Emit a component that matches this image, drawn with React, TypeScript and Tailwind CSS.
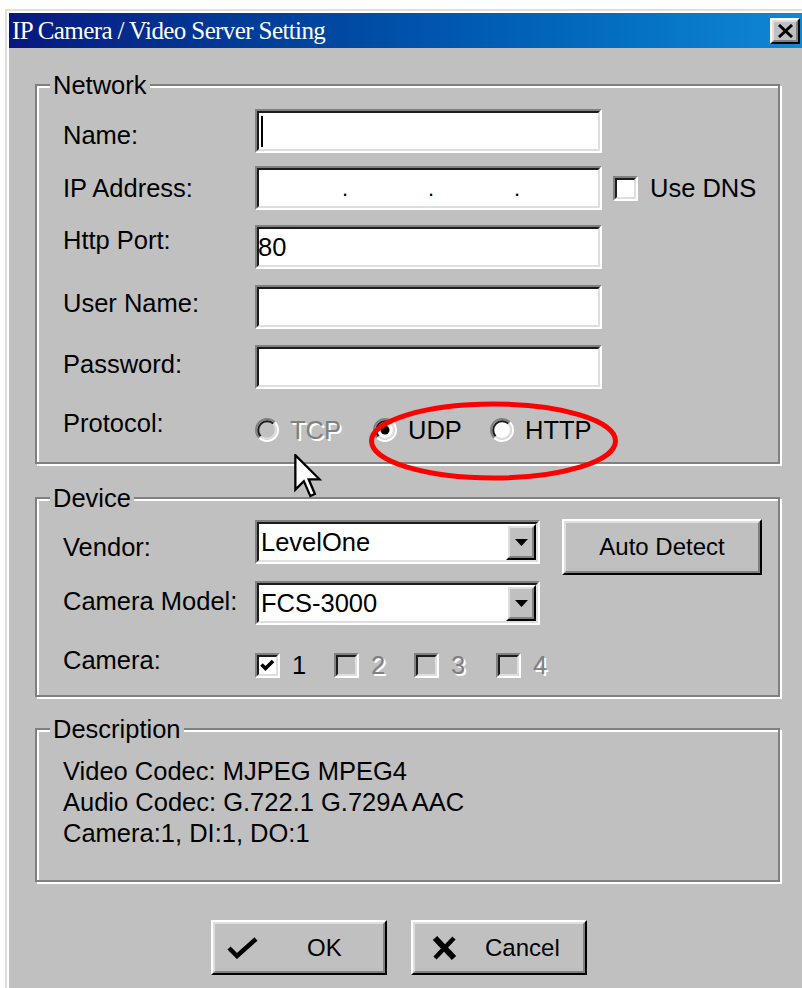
import React from 'react';

type BoxProps = { className?: string; children?: React.ReactNode };

// classic 3D edges: sunken for fields, raised for buttons
const Sunken: React.FC<BoxProps & { fill?: string }> = ({ className = '', fill = 'bg-white', children }) => (
    <div className={`border-2 border-t-[#808080] border-l-[#808080] border-r-white border-b-white ${className}`}>
        <div className={`flex h-full w-full items-center border-2 border-t-[#1c1c1c] border-l-[#1c1c1c] border-r-[#dfdfdf] border-b-[#dfdfdf] ${fill}`}>
            {children}
        </div>
    </div>
);

const Raised: React.FC<BoxProps & { inner?: string }> = ({ className = '', inner = '', children }) => (
    <div className={`border-2 border-t-white border-l-white border-r-black border-b-black bg-[#c0c0c0] ${className}`}>
        <div className={`flex h-full w-full items-center border-2 border-t-[#dfdfdf] border-l-[#dfdfdf] border-r-[#808080] border-b-[#808080] ${inner}`}>
            {children}
        </div>
    </div>
);

const Group: React.FC<BoxProps & { title: string }> = ({ title, className = '', children }) => (
    <div className={`relative ml-[26px] w-[745px] border-2 border-[#808080] shadow-[inset_2px_2px_0_#fff,2px_2px_0_#fff] ${className}`}>
        <span className="absolute left-[13px] top-[-14px] bg-[#c0c0c0] px-[3px] leading-[26px]">{title}</span>
        {children}
    </div>
);

const disabledText = 'text-[#808080] [text-shadow:2px_2px_0_#fff]';

const CheckBox: React.FC<{ checked?: boolean; disabled?: boolean; className?: string }> = ({ checked, disabled, className = '' }) => (
    <Sunken className={`h-[25px] w-[25px] shrink-0 ${className}`} fill={disabled ? 'bg-[#c0c0c0]' : 'bg-white'}>
        {checked && (
            <svg width="17" height="17" viewBox="0 0 17 17">
                <polyline points="2.5,7.5 6.5,11.5 14,4" fill="none" stroke="#000" strokeWidth="3.6" />
            </svg>
        )}
    </Sunken>
);

const Radio: React.FC<{ checked?: boolean; disabled?: boolean }> = ({ checked, disabled }) => (
    <svg width="24" height="24" viewBox="0 0 24 24" className="shrink-0">
        <circle cx="12" cy="12" r="9" fill={disabled ? '#c0c0c0' : '#fff'} />
        <path d="M4.22 19.78A11 11 0 0 1 19.78 4.22" fill="none" stroke="#808080" strokeWidth="2" />
        <path d="M19.78 4.22A11 11 0 0 1 4.22 19.78" fill="none" stroke="#fff" strokeWidth="2" />
        <path d="M5.64 18.36A9 9 0 0 1 18.36 5.64" fill="none" stroke="#1c1c1c" strokeWidth="2" />
        <path d="M18.36 5.64A9 9 0 0 1 5.64 18.36" fill="none" stroke="#dfdfdf" strokeWidth="2" />
        {checked && <circle cx="12" cy="12" r="4.5" fill="#000" />}
    </svg>
);

const Combo: React.FC<{ value: string; className?: string }> = ({ value, className = '' }) => (
    <Sunken className={`h-[44px] w-[285px] shrink-0 ${className}`}>
        <span className="ml-[2px] flex-1">{value}</span>
        <Raised className="h-full w-[30px]" inner="justify-center">
            <svg width="13" height="7" viewBox="0 0 13 7">
                <polygon points="0,0 13,0 6.5,7" fill="#000" />
            </svg>
        </Raised>
    </Sunken>
);

const Field: React.FC<BoxProps> = ({ children }) => (
    <Sunken className="h-[44px] w-[347px] shrink-0">{children}</Sunken>
);

const Row: React.FC<{ label: string; labelClass?: string; className?: string; children?: React.ReactNode }> = ({
    label,
    labelClass = '',
    className = '',
    children,
}) => (
    <div className={`flex h-[44px] items-center ${className}`}>
        <span className={`w-[192px] shrink-0 ${labelClass}`}>{label}</span>
        {children}
    </div>
);

export default function App() {
    return (
        <div className="relative h-[988px] overflow-hidden bg-white pl-[5px] pt-[9px] font-['Liberation_Sans',Arial,sans-serif] text-[25.5px] text-black">
            <div className="h-[990px] border-l-2 border-t-2 border-[#dfdfdf] bg-[#c0c0c0] pl-[2px] pt-[2px] shadow-[inset_2px_2px_0_#fff]">
                {/* Title bar */}
                <div className="flex h-[35px] items-center justify-between bg-gradient-to-r from-[#08177f] to-[#1088d4] pl-[3px] pr-[2px]">
                    <span className="font-['Liberation_Serif','Times_New_Roman',serif] text-[25px] tracking-[-0.6px] text-white">
                        IP Camera / Video Server Setting
                    </span>
                    <Raised className="h-[26px] w-[30px]" inner="justify-center">
                        <svg width="17" height="14" viewBox="0 0 17 14">
                            <path d="M2 1L15 13M15 1L2 13" stroke="#000" strokeWidth="3" />
                        </svg>
                    </Raised>
                </div>

                {/* Network */}
                <Group title="Network" className="mt-[36px] pb-[10px] pl-[26px] pt-[23px]">
                    <Row label="Name:" labelClass="mt-[8px]">
                        <Field>
                            <span className="ml-[2px] h-[31px] w-[2px] bg-black" />
                        </Field>
                    </Row>
                    <Row label="IP Address:" className="mt-[13px]">
                        <Field>
                            <div className="flex pl-[3px] text-[22px]">
                                <span className="w-[86px] text-right">.</span>
                                <span className="w-[86px] text-right">.</span>
                                <span className="w-[86px] text-right">.</span>
                            </div>
                        </Field>
                        <CheckBox className="ml-[11px]" />
                        <span className="ml-[12px]">Use DNS</span>
                    </Row>
                    <Row label="Http Port:" labelClass="mt-[-14px]" className="mt-[15px]">
                        <Field>
                            <span className="ml-[-1px]">80</span>
                        </Field>
                    </Row>
                    <Row label="User Name:" labelClass="mt-[-8px]" className="mt-[16px]">
                        <Field />
                    </Row>
                    <Row label="Password:" labelClass="mt-[-6px]" className="mt-[16px]">
                        <Field />
                    </Row>
                    <div className="mt-[19px] flex h-[44px] items-center">
                        <span className="mt-[-14px] w-[192px] shrink-0">Protocol:</span>
                        <div className="flex w-[118px] items-center gap-[11px]">
                            <Radio disabled />
                            <span className={disabledText}>TCP</span>
                        </div>
                        <div className="flex w-[117px] items-center gap-[11px]">
                            <Radio checked />
                            <span>UDP</span>
                        </div>
                        <div className="flex items-center gap-[11px]">
                            <Radio />
                            <span>HTTP</span>
                        </div>
                    </div>
                </Group>

                {/* Device */}
                <Group title="Device" className="mt-[33px] pb-[17px] pl-[26px] pt-[20px]">
                    <div className="flex h-[56px] items-start">
                        <span className="mt-[6px] flex h-[44px] w-[192px] shrink-0 items-center">Vendor:</span>
                        <Combo value="LevelOne" className="mt-[1px]" />
                        <Raised className="ml-[22px] h-[56px] w-[200px] text-[24px]" inner="justify-center">
                            Auto Detect
                        </Raised>
                    </div>
                    <Row label="Camera Model:" labelClass="mt-[-3px]" className="mt-[6px]">
                        <Combo value="FCS-3000" />
                    </Row>
                    <div className="mt-[27px] flex h-[26px] items-center">
                        <span className="mt-[-10px] w-[192px] shrink-0">Camera:</span>
                        <div className="flex w-[79px] items-center gap-[12px]">
                            <CheckBox checked />
                            <span>1</span>
                        </div>
                        <div className="flex w-[80px] items-center gap-[12px]">
                            <CheckBox disabled />
                            <span className={disabledText}>2</span>
                        </div>
                        <div className="flex w-[82px] items-center gap-[12px]">
                            <CheckBox disabled />
                            <span className={disabledText}>3</span>
                        </div>
                        <div className="flex items-center gap-[12px]">
                            <CheckBox disabled />
                            <span className={disabledText}>4</span>
                        </div>
                    </div>
                </Group>

                {/* Description */}
                <Group title="Description" className="mt-[31px] h-[154px] pl-[26px] pt-[26px] leading-[31px]">
                    <div>Video Codec: MJPEG MPEG4</div>
                    <div>Audio Codec: G.722.1 G.729A AAC</div>
                    <div>Camera:1, DI:1, DO:1</div>
                </Group>

                {/* OK / Cancel */}
                <div className="ml-[202px] mt-[38px] flex gap-[24px] text-[24px]">
                    <Raised className="h-[55px] w-[176px]" inner="pl-[12px]">
                        <svg width="31" height="22" viewBox="0 0 31 22">
                            <path d="M2 11L10 19L29 2" fill="none" stroke="#000" strokeWidth="4.5" />
                        </svg>
                        <span className="ml-[49px]">OK</span>
                    </Raised>
                    <Raised className="h-[55px] w-[176px]" inner="pl-[17px]">
                        <svg width="25" height="26" viewBox="0 0 25 26">
                            <path d="M3 3L22 23" stroke="#000" strokeWidth="6" />
                            <path d="M22 3L3 23" stroke="#000" strokeWidth="4.5" />
                        </svg>
                        <span className="ml-[28px]">Cancel</span>
                    </Raised>
                </div>
            </div>

            {/* annotation ring around UDP / HTTP */}
            <svg className="pointer-events-none absolute left-[366px] top-[400px]" width="256" height="84" viewBox="0 0 256 84">
                <ellipse cx="127.5" cy="41" rx="122" ry="37" fill="none" stroke="#f00" strokeWidth="5" />
            </svg>

            {/* mouse pointer */}
            <svg className="pointer-events-none absolute left-[294px] top-[454px]" width="28" height="46" viewBox="0 0 12 20">
                <path d="M0.5 0.5V15.5L4.2 11.8L7 18.3L9 17.4L6.3 11H11Z" fill="#fff" stroke="#000" strokeWidth="1" strokeLinejoin="miter" />
            </svg>
        </div>
    );
}
